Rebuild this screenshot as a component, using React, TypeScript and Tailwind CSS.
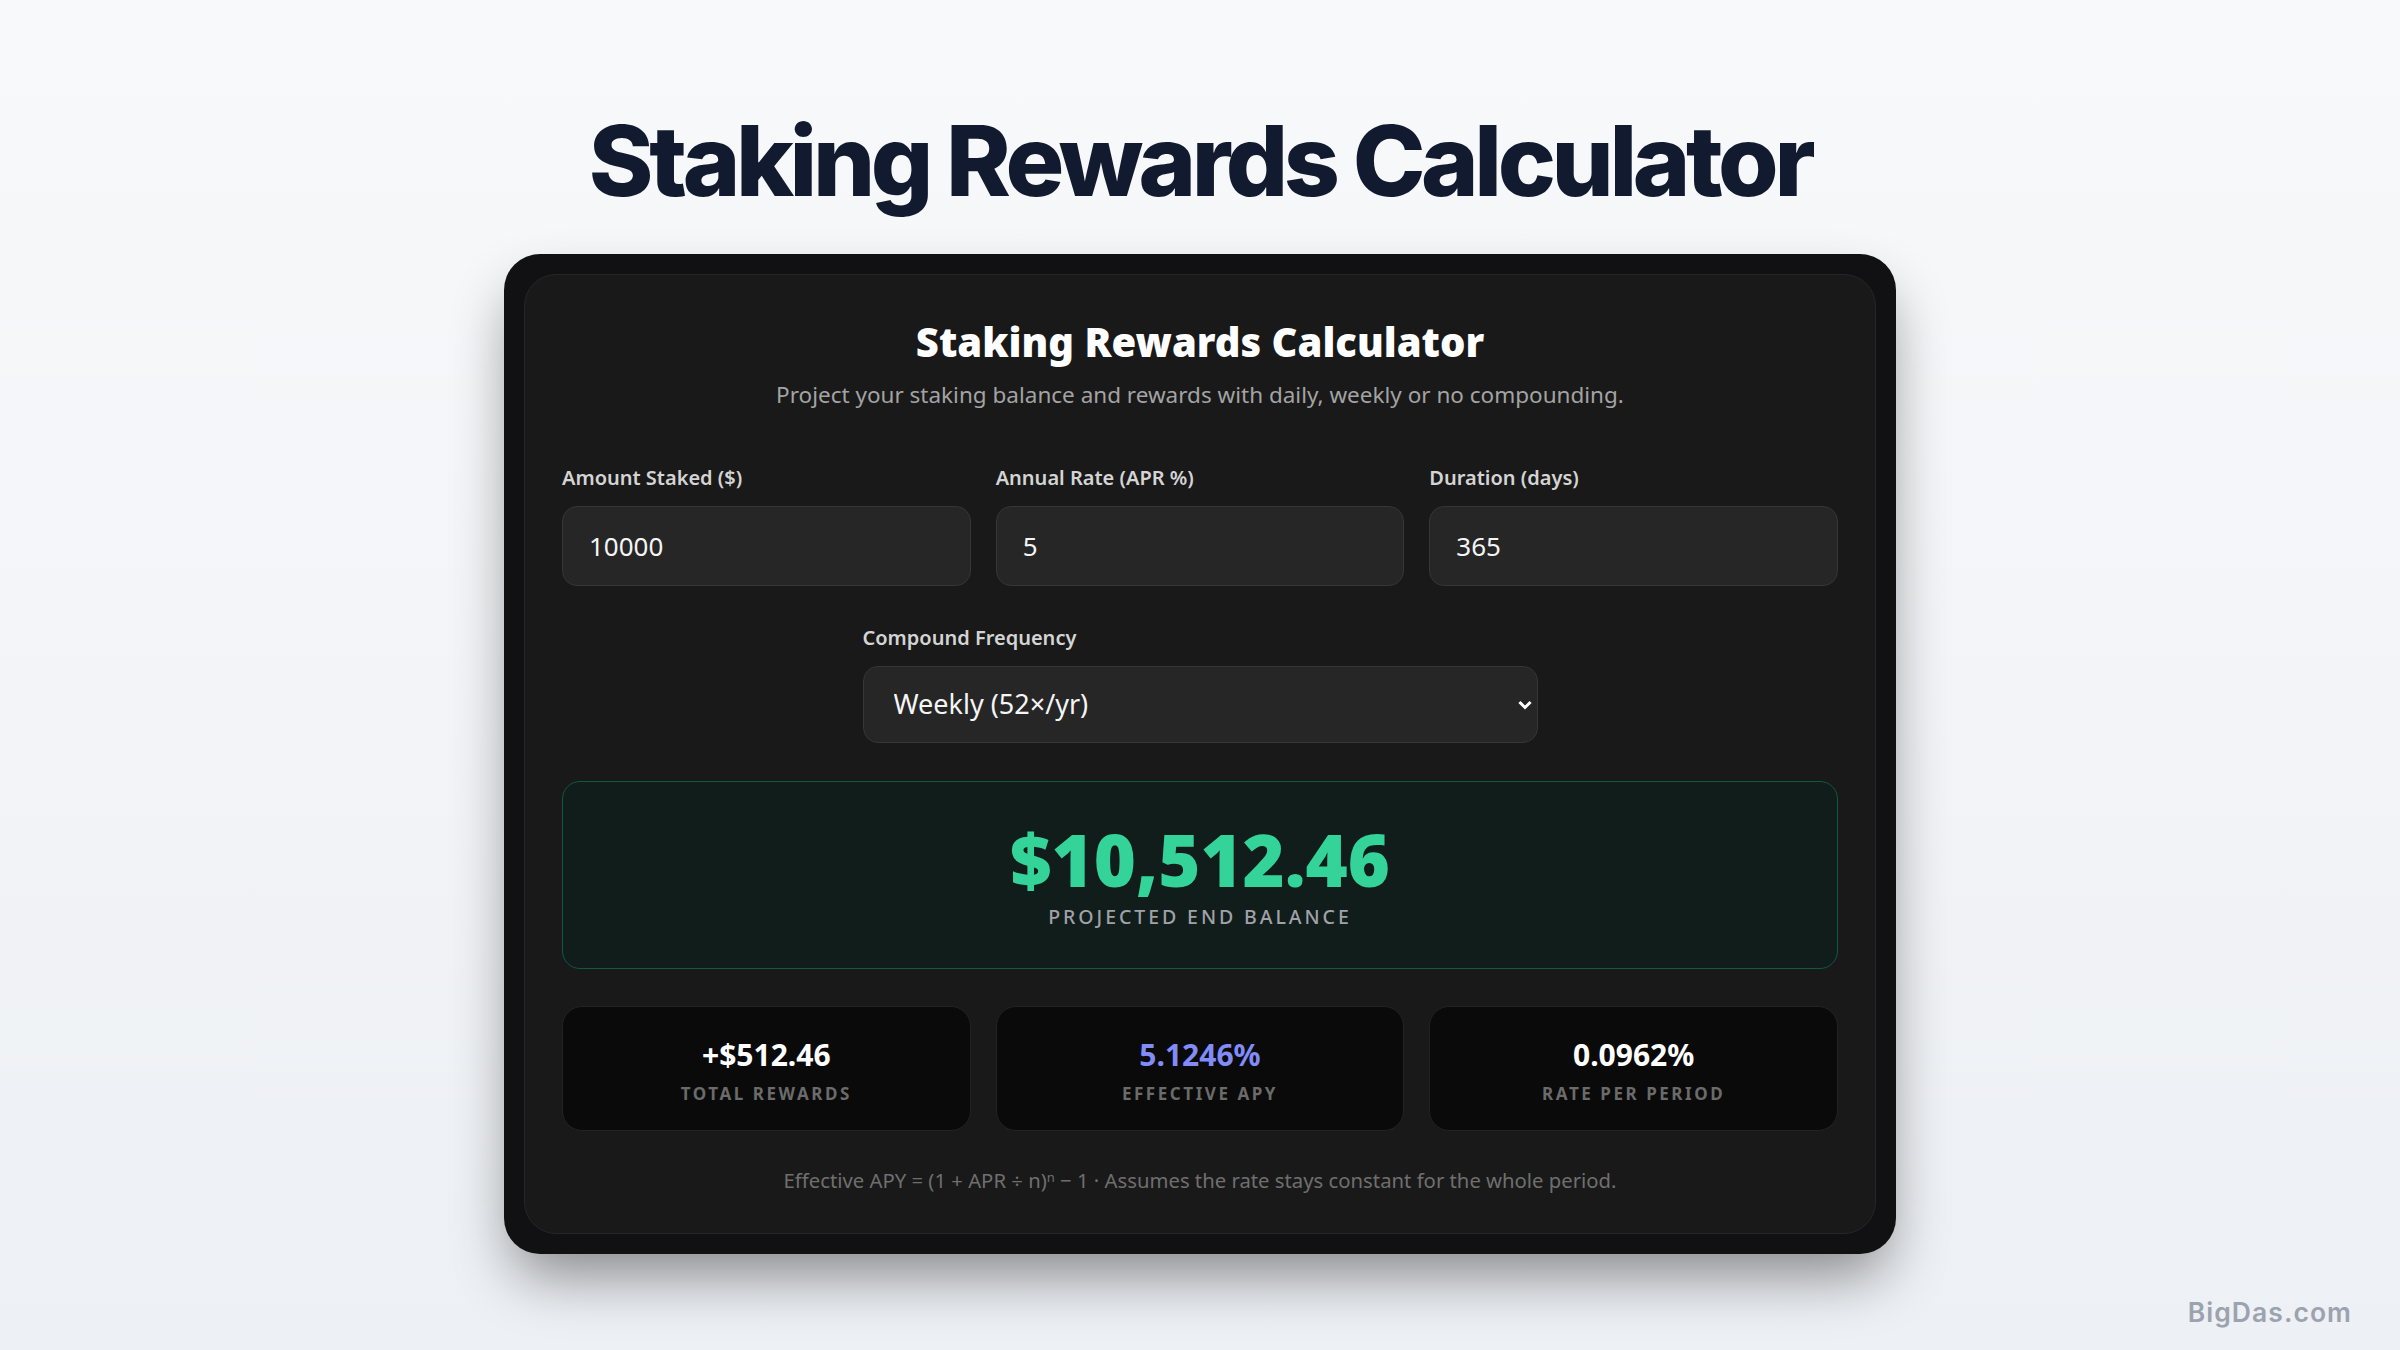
import React from 'react';

const inputs = [
  { label: 'Amount Staked ($)', value: '10000' },
  { label: 'Annual Rate (APR %)', value: '5' },
  { label: 'Duration (days)', value: '365' },
];

const stats = [
  { value: '+$512.46', label: 'Total Rewards', color: 'text-white' },
  { value: '5.1246%', label: 'Effective APY', color: 'text-[#818cf8]' },
  { value: '0.0962%', label: 'Rate per Period', color: 'text-white' },
];

const App: React.FC = () => {
  return (
    <div className="relative min-h-screen w-full bg-gradient-to-b from-[#f8f9fb] to-[#edf0f4] flex flex-col items-center pt-[112px] pb-[96px]">
      {/* Page title */}
      <h1 className="text-[98px] leading-[98px] font-extrabold tracking-[-0.045em] text-[#111a2e] font-['Inter',sans-serif]">
        Staking Rewards Calculator
      </h1>

      {/* Device frame */}
      <div className="mt-[44px] w-[1392px] rounded-[36px] bg-[#111113] p-[20px] shadow-[0_30px_60px_-10px_rgba(0,0,0,0.45)]">
        <div className="rounded-[32px] border border-[#262626] bg-[#191919] px-[37px] pt-[43px] pb-[39px] font-['Noto_Sans',sans-serif]">
          <h2 className="text-center text-[40px] leading-[48px] font-black text-white">
            Staking Rewards Calculator
          </h2>
          <p className="mt-[14px] text-center text-[22.5px] leading-[30px] text-[#a3a3a3]">
            Project your staking balance and rewards with daily, weekly or no compounding.
          </p>

          <div className="mt-[54px] grid grid-cols-3 gap-[25px]">
            {inputs.map((f) => (
              <div key={f.label} className="flex flex-col gap-[14px]">
                <label className="text-[20px] leading-[28px] font-semibold text-[#d4d4d4]">
                  {f.label}
                </label>
                <input
                  defaultValue={f.value}
                  className="h-[80px] rounded-[15px] border border-[#363636] bg-[#262626] px-[26px] text-[26px] text-[#f5f5f5] outline-none"
                />
              </div>
            ))}
          </div>

          <div className="mx-auto mt-[38px] flex w-[675px] flex-col gap-[14px]">
            <label className="text-[20px] leading-[28px] font-semibold text-[#d4d4d4]">
              Compound Frequency
            </label>
            <div className="relative">
              <select
                defaultValue="weekly"
                className="h-[77px] w-full appearance-none rounded-[15px] border border-[#363636] bg-[#262626] px-[30px] text-[27px] text-[#f5f5f5] outline-none"
              >
                <option value="none">None (simple)</option>
                <option value="daily">Daily (365×/yr)</option>
                <option value="weekly">Weekly (52×/yr)</option>
              </select>
              <svg
                className="pointer-events-none absolute right-[6px] top-1/2 h-[14px] w-[14px] -translate-y-1/2"
                viewBox="0 0 14 14"
                fill="none"
              >
                <path d="M2.5 5 L7 9.5 L11.5 5" stroke="#ffffff" strokeWidth="3" strokeLinecap="square" />
              </svg>
            </div>
          </div>

          {/* Headline result */}
          <div className="mt-[38px] flex h-[188px] flex-col items-center justify-center rounded-[18px] border border-[#0f5a41] bg-[#101d1a]">
            <div className="text-[72px] leading-[78px] font-black text-[#34d399]">$10,512.46</div>
            <div className="mt-[6px] text-[19.5px] leading-[26px] font-medium uppercase tracking-[0.15em] text-[#a1a1aa]">
              Projected End Balance
            </div>
          </div>

          <div className="mt-[37px] grid grid-cols-3 gap-[25px]">
            {stats.map((s) => (
              <div
                key={s.label}
                className="flex h-[125px] flex-col items-center justify-center rounded-[20px] border border-[#232323] bg-[#0a0a0a] pt-[5px]"
              >
                <div className={`text-[30px] leading-[36px] font-bold ${s.color}`}>{s.value}</div>
                <div className="mt-[10px] text-[17px] leading-[22px] font-bold uppercase tracking-[0.15em] text-[#6b6b6b]">
                  {s.label}
                </div>
              </div>
            ))}
          </div>

          <p className="mt-[35px] text-center text-[20.3px] leading-[28px] text-[#6f6f6f]">
            Effective APY = (1 + APR ÷ n)<sup className="text-[13px]">n</sup> − 1 · Assumes the rate stays constant for the whole period.
          </p>
        </div>
      </div>

      <div className="absolute bottom-[17px] right-[48px] text-[26.5px] font-semibold tracking-[0.04em] text-[#9ca3af] font-['Inter',sans-serif]">
        BigDas.com
      </div>
    </div>
  );
};

export default App;
